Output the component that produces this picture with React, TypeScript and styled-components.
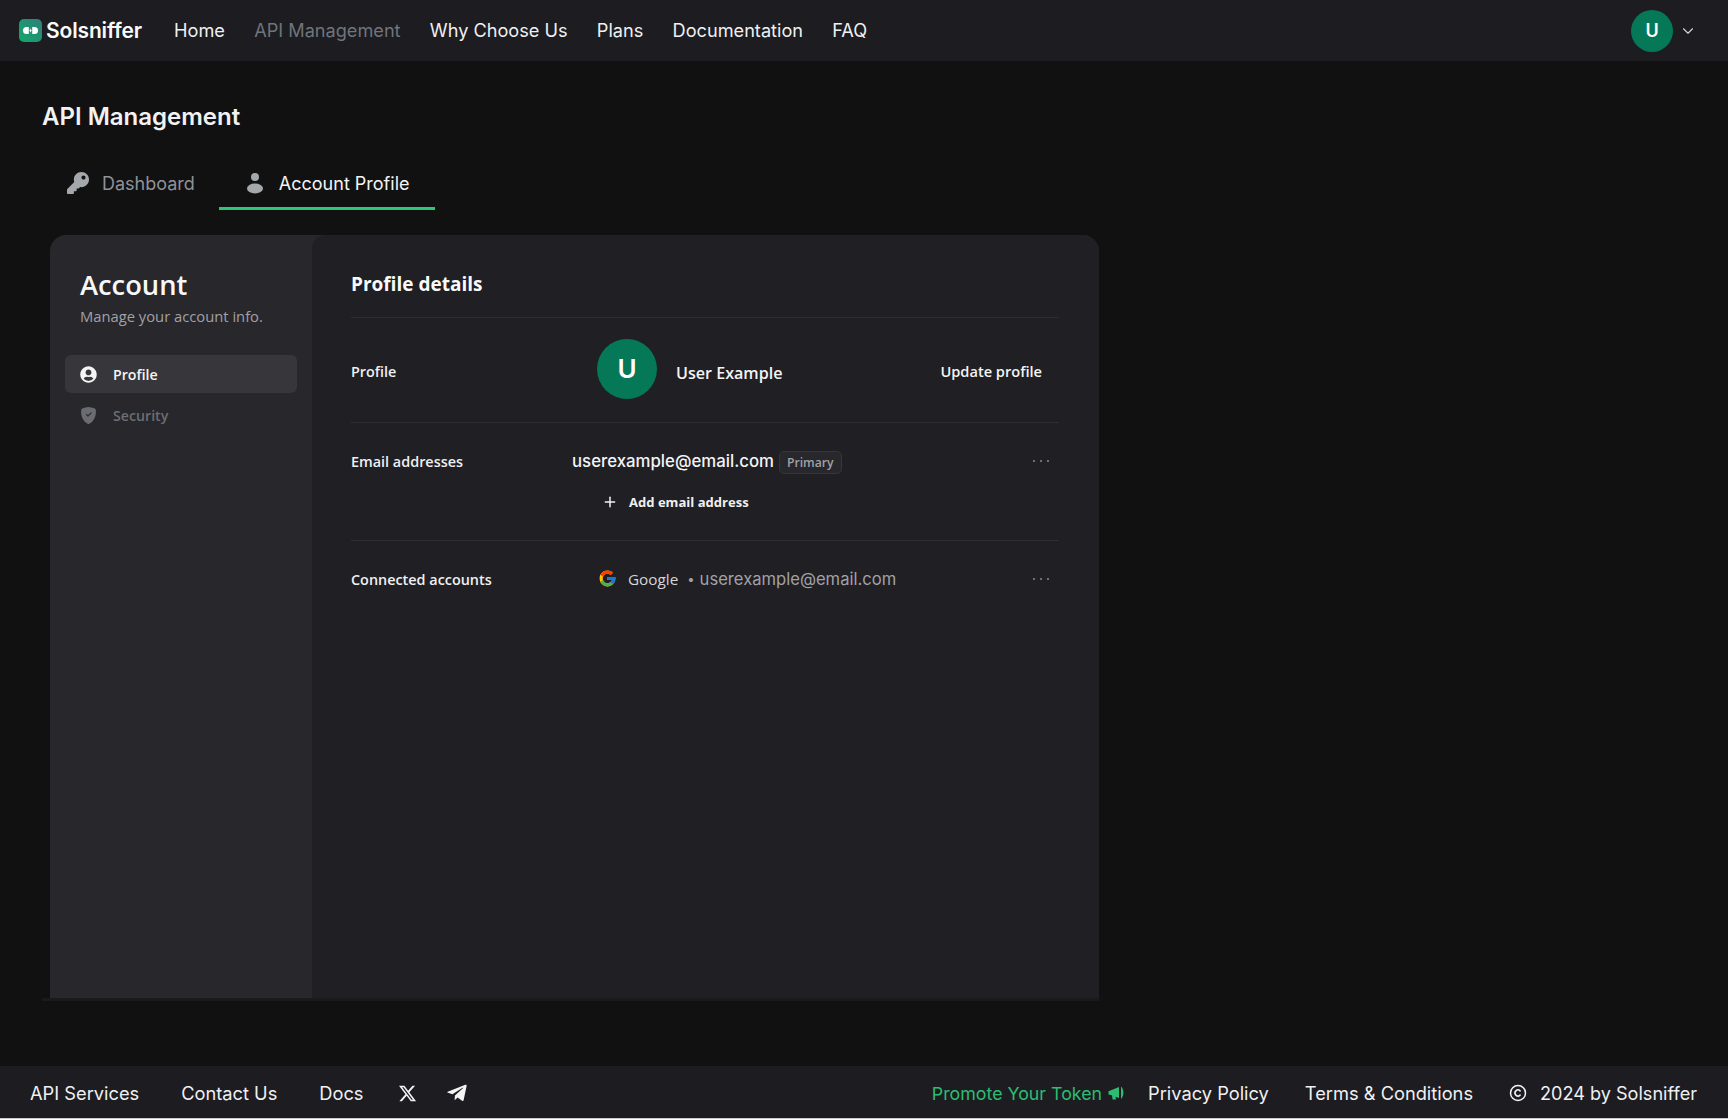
import React from "react";
import styled, { createGlobalStyle } from "styled-components";
import { ChevronDown, Copyright, Plus } from "lucide-react";
import { FaKey, FaTelegramPlane, FaUserCircle } from "react-icons/fa";
import { FaXTwitter } from "react-icons/fa6";
import { FcGoogle } from "react-icons/fc";
import { BsShieldFillCheck } from "react-icons/bs";

const GlobalStyle = createGlobalStyle`
  * {
    box-sizing: border-box;
  }

  body {
    margin: 0;
    background: #111112;
    color: #f4f4f5;
    font-family: Inter, "Liberation Sans", sans-serif;
  }
`;

const navLinks = ["Home", "API Management", "Why Choose Us", "Plans", "Documentation", "FAQ"];

function PersonIcon() {
  return (
    <svg width="18" height="22" viewBox="0 0 18 22" fill="#a4a8ad">
      <circle cx="9" cy="5" r="4" />
      <ellipse cx="9" cy="16.5" rx="8" ry="5" />
    </svg>
  );
}

function LogoMark() {
  return (
    <svg width="23" height="23" viewBox="0 0 23 23">
      <defs>
        <linearGradient id="logoGradient" x1="0" y1="1" x2="1" y2="0">
          <stop offset="0" stopColor="#12a86b" />
          <stop offset="1" stopColor="#2f7f78" />
        </linearGradient>
      </defs>
      <rect width="23" height="23" rx="5" fill="url(#logoGradient)" />
      <path d="M9.8 8H7.5a3.5 3.5 0 0 0 0 7h2.3z" fill="#fff" />
      <path d="M13.2 8h2.3a3.5 3.5 0 0 1 0 7h-2.3z" fill="#fff" />
      <path d="M11.5 9.5l1 2-1 2-1-2z" fill="#fff" />
    </svg>
  );
}

function MegaphoneIcon() {
  return (
    <svg width="16" height="16" viewBox="0 0 16 16" fill="#2dbd72">
      <path d="M0.5 6.2L11 2v11L7.6 11.7 7.9 14.5H4.6L4 10.3 0.5 9.4z" />
      <path d="M13 1.5c1.6 1.6 2.4 3.9 2.4 6.2S14.600 12.300 13 14z" />
    </svg>
  );
}

export default function App() {
  return (
    <>
      <GlobalStyle />
      <Page>
        <Header>
          <Brand>
            <LogoMark />
            <BrandName>Solsniffer</BrandName>
          </Brand>
          <Nav>
            {navLinks.map((link) => (
              <NavLink key={link} $active={link === "API Management"}>
                {link}
              </NavLink>
            ))}
          </Nav>
          <UserMenu>
            <HeaderAvatar>U</HeaderAvatar>
            <ChevronDown size={18} color="#d4d4d8" strokeWidth={1.5} />
          </UserMenu>
        </Header>

        <Main>
          <PageTitle>API Management</PageTitle>
          <Tabs>
            <Tab>
              <KeyIcon />
              Dashboard
            </Tab>
            <Tab $active>
              <PersonIcon />
              Account Profile
            </Tab>
          </Tabs>

          <CardFrame>
            <Card>
              <Sidebar>
                <SidebarTitle>Account</SidebarTitle>
                <SidebarSub>Manage your account info.</SidebarSub>
                <SideMenu>
                  <SideItem $active>
                    <FaUserCircle size={17} color="#f4f4f5" />
                    Profile
                  </SideItem>
                  <SideItem>
                    <BsShieldFillCheck size={17} color="#6b6b72" />
                    Security
                  </SideItem>
                </SideMenu>
              </Sidebar>

              <Details>
                <DetailsTitle>Profile details</DetailsTitle>

                <ProfileRow>
                  <ProfileLabel>Profile</ProfileLabel>
                  <ProfileAvatar>U</ProfileAvatar>
                  <ProfileName>User Example</ProfileName>
                  <UpdateLink>Update profile</UpdateLink>
                </ProfileRow>

                <EmailRow>
                  <EmailLine>
                    <RowLabel>Email addresses</RowLabel>
                    <EmailValue>userexample@email.com</EmailValue>
                    <Badge>Primary</Badge>
                    <Dots>
                      <i />
                      <i />
                      <i />
                    </Dots>
                  </EmailLine>
                  <AddEmail>
                    <Plus size={16} color="#f4f4f5" strokeWidth={2.2} />
                    Add email address
                  </AddEmail>
                </EmailRow>

                <ConnectedRow>
                  <RowLabel>Connected accounts</RowLabel>
                  <GoogleIcon />
                  <ProviderName>Google</ProviderName>
                  <ProviderEmail>userexample@email.com</ProviderEmail>
                  <Dots>
                    <i />
                    <i />
                    <i />
                  </Dots>
                </ConnectedRow>
              </Details>
            </Card>
          </CardFrame>
        </Main>

        <Footer>
          <FooterLeft>
            <FooterLink>API Services</FooterLink>
            <FooterLink>Contact Us</FooterLink>
            <FooterLink>Docs</FooterLink>
            <Socials>
              <FaXTwitter size={19} color="#f4f4f5" />
              <FaTelegramPlane size={22} color="#f4f4f5" />
            </Socials>
          </FooterLeft>
          <FooterRight>
            <Promote>
              Promote Your Token
              <MegaphoneIcon />
            </Promote>
            <FooterLink>Privacy Policy</FooterLink>
            <FooterLink>Terms &amp; Conditions</FooterLink>
            <CopyrightText>
              <Copyright size={18} color="#f4f4f5" />
              2024 by Solsniffer
            </CopyrightText>
          </FooterRight>
        </Footer>
      </Page>
    </>
  );
}

const Page = styled.div`
  min-height: 100vh;
  display: flex;
  flex-direction: column;
`;

const Header = styled.header`
  height: 61px;
  padding: 0 31px 0 19px;
  display: flex;
  align-items: center;
  background: #1c1c21;
`;

const Brand = styled.div`
  display: flex;
  align-items: center;
  gap: 4px;
`;

const BrandName = styled.span`
  font-size: 21px;
  font-weight: 600;
  letter-spacing: -0.15px;
  color: #fafafa;
`;

const Nav = styled.nav`
  margin-left: 32px;
  display: flex;
  gap: 29.3px;
`;

const NavLink = styled.a<{ $active?: boolean }>`
  margin-top: -1px;
  font-size: 18.15px;
  color: ${(p) => (p.$active ? "#70747b" : "#f0f0f2")};
`;

const UserMenu = styled.div`
  margin-left: auto;
  display: flex;
  align-items: center;
  gap: 6px;
`;

const HeaderAvatar = styled.div`
  width: 42px;
  height: 42px;
  border-radius: 50%;
  display: flex;
  align-items: center;
  justify-content: center;
  background: #047857;
  color: #fff;
  font-size: 18px;
  font-weight: 600;
`;

const Main = styled.main`
  flex: 1;
  padding: 40px 0 0 42px;
`;

const PageTitle = styled.h1`
  margin: 0;
  font-size: 24px;
  line-height: 32px;
  font-weight: 600;
  color: #f2f2f3;
`;

const Tabs = styled.div`
  margin-top: 26px;
  display: flex;
`;

const Tab = styled.div<{ $active?: boolean }>`
  height: 51px;
  padding: ${(p) => (p.$active ? "0 25px 0 27px" : "0 24px 0 25px")};
  display: flex;
  align-items: center;
  gap: ${(p) => (p.$active ? "15px" : "13px")};
  font-size: 18px;
  color: ${(p) => (p.$active ? "#f4f4f5" : "#8e9298")};
  border-bottom: 3px solid ${(p) => (p.$active ? "#2dc57a" : "transparent")};
`;

const KeyIcon = styled(FaKey)`
  width: 22px;
  height: 22px;
  color: #a4a8ad;
`;

const CardFrame = styled.div`
  margin-top: 25px;
  width: 1057px;
  padding-left: 8px;
  border-bottom: 3px solid #191a1c;
`;

const Card = styled.section`
  height: 763px;
  display: flex;
  border-radius: 16px 16px 0 0;
  background: #27272c;
  font-family: "Open Sans", Inter, sans-serif;
`;

const Sidebar = styled.aside`
  width: 262px;
  padding: 31px 15px 0;
`;

const SidebarTitle = styled.h2`
  margin: 0 0 0 15px;
  font-size: 27.3px;
  line-height: 38px;
  font-weight: 600;
  color: #f8f8f8;
`;

const SidebarSub = styled.p`
  margin: 2px 0 0 15px;
  font-size: 14.75px;
  line-height: 20px;
  color: #a1a1a6;
  white-space: nowrap;
`;

const SideMenu = styled.div`
  margin-top: 29px;
  display: flex;
  flex-direction: column;
  gap: 3px;
`;

const SideItem = styled.div<{ $active?: boolean }>`
  height: 38px;
  padding: 0 15px;
  display: flex;
  align-items: center;
  gap: 16px;
  border-radius: 6px;
  background: ${(p) => (p.$active ? "#36363b" : "transparent")};
  color: ${(p) => (p.$active ? "#f4f4f5" : "#6d6d73")};
  font-size: 14.2px;
  font-weight: 600;
`;

const Details = styled.div`
  flex: 1;
  padding: 31px 40px 0 39px;
  border-radius: 14px 16px 0 0;
  background: #1f1f24;
`;

const DetailsTitle = styled.h3`
  margin: 0;
  height: 52px;
  padding-top: 5px;
  font-size: 19px;
  line-height: 26px;
  font-weight: 700;
  color: #fafafa;
  border-bottom: 1px solid #2d2d32;
`;

const ProfileRow = styled.div`
  height: 105px;
  padding: 0 17px 3px 0;
  display: flex;
  align-items: center;
  border-bottom: 1px solid #2d2d32;
`;

const RowLabel = styled.span`
  font-size: 14.4px;
  font-weight: 600;
  color: #f0f0f1;
  white-space: nowrap;
`;

const ProfileLabel = styled(RowLabel)`
  width: 246px;
  margin-top: 6px;
`;

const ProfileAvatar = styled.div`
  width: 60px;
  height: 60px;
  border-radius: 50%;
  display: flex;
  align-items: center;
  justify-content: center;
  background: #047857;
  color: #fff;
  font-size: 26px;
  font-weight: 600;
  font-family: Inter, sans-serif;
`;

const ProfileName = styled.span`
  margin: 8px 0 0 19px;
  font-size: 16.1px;
  font-weight: 600;
  color: #f4f4f5;
`;

const UpdateLink = styled.span`
  margin: 4px 0 0 auto;
  font-size: 14.6px;
  font-weight: 600;
  color: #f4f4f5;
`;

const EmailRow = styled.div`
  height: 118px;
  padding-top: 25px;
  border-bottom: 1px solid #2d2d32;
`;

const EmailLine = styled.div`
  padding-right: 10px;
  display: flex;
  align-items: center;
  height: 26px;

  & > ${RowLabel} {
    width: 221px;
  }
`;

const EmailValue = styled.span`
  font-family: Inter, sans-serif;
  font-size: 16.8px;
  font-weight: 500;
  color: #f4f4f5;
  white-space: nowrap;
`;

const Badge = styled.span`
  margin: 2px 0 0 5px;
  height: 23px;
  padding: 0 7px;
  display: flex;
  align-items: center;
  border: 1px solid #35353a;
  border-radius: 5px;
  background: #27272c;
  color: #a1a1a6;
  font-size: 12.2px;
  font-weight: 600;
`;

const Dots = styled.span`
  margin-left: auto;
  display: flex;
  gap: 5px;

  i {
    width: 2px;
    height: 2px;
    border-radius: 50%;
    background: #8a8a90;
  }
`;

const AddEmail = styled.div`
  margin: 19px 0 0 251px;
  display: flex;
  align-items: center;
  gap: 11px;
  font-size: 13.05px;
  font-weight: 700;
  color: #f0f0f1;
`;

const ConnectedRow = styled.div`
  height: 76px;
  padding-right: 10px;
  display: flex;
  align-items: center;

  & > ${RowLabel} {
    width: 247px;
  }
`;

const GoogleIcon = styled(FcGoogle)`
  width: 19px;
  height: 19px;
  margin-top: -2px;
`;

const ProviderName = styled.span`
  margin-left: 11px;
  font-size: 15.3px;
  color: #d6d6d9;
`;

const ProviderEmail = styled.span`
  margin-left: 9px;
  font-family: Inter, sans-serif;
  font-size: 16.6px;
  color: #a1a1a6;

  &::before {
    content: "•";
    margin-right: 5px;
    font-size: 13px;
    vertical-align: 1px;
  }
`;

const Footer = styled.footer`
  height: 53px;
  padding: 2px 31px 0 30px;
  display: flex;
  align-items: center;
  justify-content: space-between;
  background: #1c1c21;
  border-bottom: 1px solid #c9c9c9;
`;

const FooterLeft = styled.div`
  display: flex;
  align-items: center;
  gap: 42px;
`;

const FooterRight = styled.div`
  display: flex;
  align-items: center;
  gap: 36px;
`;

const FooterLink = styled.a`
  font-size: 18.25px;
  color: #f0f0f2;
  white-space: nowrap;
`;

const Socials = styled.div`
  margin-left: -7px;
  display: flex;
  align-items: center;
  gap: 29px;
`;

const Promote = styled.a`
  margin-right: -12px;
  display: flex;
  align-items: center;
  gap: 6px;
  font-size: 17.8px;
  color: #2dbd72;
  white-space: nowrap;
`;

const CopyrightText = styled.div`
  display: flex;
  align-items: center;
  gap: 13px;
  font-size: 18.1px;
  color: #f0f0f2;
  white-space: nowrap;
`;
